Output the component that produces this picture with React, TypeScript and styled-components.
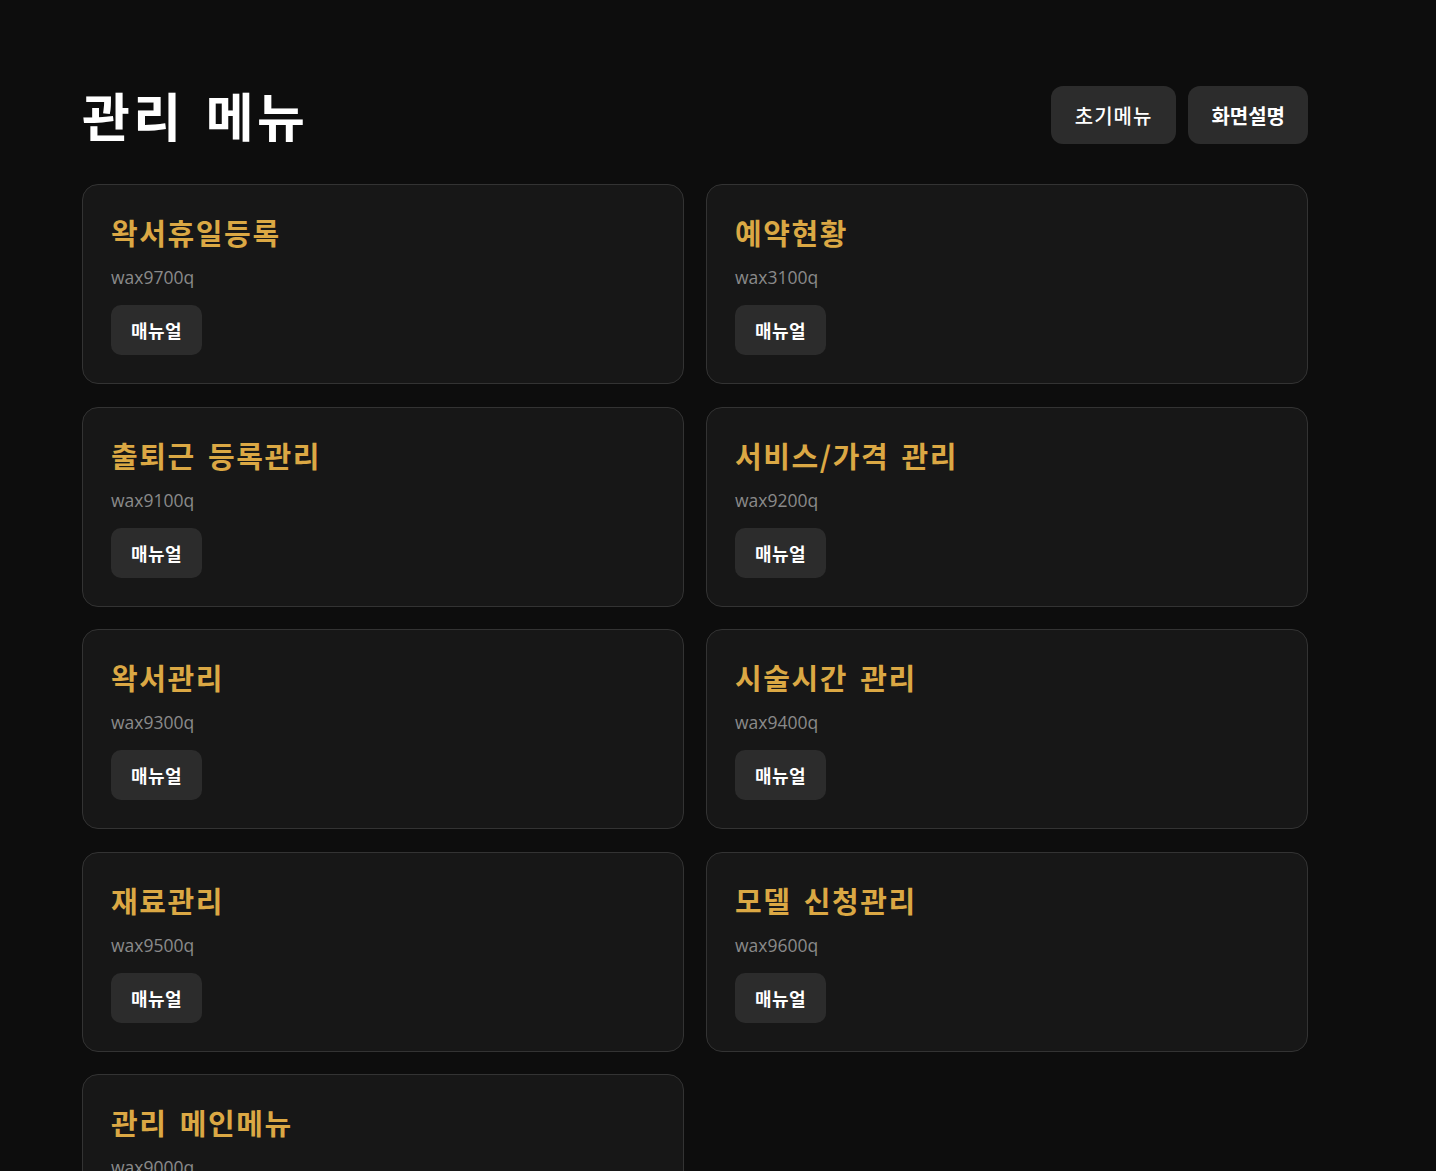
import React from "react";
import styled, { createGlobalStyle } from "styled-components";

const GlobalStyle = createGlobalStyle`
  body {
    margin: 0;
    background-color: #0d0d0d;
    font-family: "Noto Sans CJK KR", "Noto Sans", sans-serif;
  }
`;

const Page = styled.div`
  padding: 84px 82px 0;
  min-height: 100vh;
  box-sizing: border-box;
`;

const Container = styled.div`
  width: 1226px;
`;

const Header = styled.header`
  display: flex;
  align-items: center;
  justify-content: space-between;
  margin-bottom: 38px;
`;

const Title = styled.h1`
  margin: 0;
  font-size: 52px;
  line-height: 62px;
  font-weight: 700;
  letter-spacing: 3.4px;
  word-spacing: 6px;
  color: #ffffff;
`;

const HeaderActions = styled.div`
  display: flex;
  gap: 12px;
`;

const HeaderButton = styled.button<{ $bold?: boolean }>`
  height: 58px;
  padding: 0 ${({ $bold }) => ($bold ? "23px" : "24px")};
  border: none;
  border-radius: 12px;
  background-color: #2c2c2c;
  color: #ffffff;
  font-family: "Noto Sans CJK KR", sans-serif;
  font-size: 20px;
  font-weight: ${({ $bold }) => ($bold ? 700 : 500)};
  letter-spacing: ${({ $bold }) => ($bold ? "0" : "1px")};
  cursor: pointer;
`;

const Grid = styled.div`
  display: grid;
  grid-template-columns: repeat(2, 1fr);
  column-gap: 22px;
  row-gap: 22.5px;
`;

const Card = styled.div`
  background-color: #171717;
  border: 1px solid #333333;
  border-radius: 16px;
  padding: 28px;
  display: flex;
  flex-direction: column;
  align-items: flex-start;
`;

const CardTitle = styled.h2`
  margin: 0 0 14px;
  font-size: 29px;
  line-height: 38px;
  font-weight: 700;
  letter-spacing: 1.6px;
  word-spacing: 4px;
  color: #dba844;
`;

const Code = styled.div`
  font-family: "Open Sans", "Noto Sans", sans-serif;
  font-size: 17.5px;
  line-height: 24px;
  color: #8a8a8a;
  margin-bottom: 16px;
`;

const ManualButton = styled.button`
  height: 50px;
  padding: 0 20px;
  border: none;
  border-radius: 10px;
  background-color: #2c2c2c;
  color: #ffffff;
  font-family: "Noto Sans CJK KR", sans-serif;
  font-size: 18px;
  font-weight: 700;
  letter-spacing: 0.5px;
  cursor: pointer;
`;

const menus = [
  { title: "왁서휴일등록", code: "wax9700q" },
  { title: "예약현황", code: "wax3100q" },
  { title: "출퇴근 등록관리", code: "wax9100q" },
  { title: "서비스/가격 관리", code: "wax9200q" },
  { title: "왁서관리", code: "wax9300q" },
  { title: "시술시간 관리", code: "wax9400q" },
  { title: "재료관리", code: "wax9500q" },
  { title: "모델 신청관리", code: "wax9600q" },
  { title: "관리 메인메뉴", code: "wax9000q" },
];

const App = () => {
  return (
    <Page>
      <GlobalStyle />
      <Container>
        <Header>
          <Title>관리 메뉴</Title>
          <HeaderActions>
            <HeaderButton>초기메뉴</HeaderButton>
            <HeaderButton $bold>화면설명</HeaderButton>
          </HeaderActions>
        </Header>
        <Grid>
          {menus.map((m) => (
            <Card key={m.code}>
              <CardTitle>{m.title}</CardTitle>
              <Code>{m.code}</Code>
              <ManualButton>매뉴얼</ManualButton>
            </Card>
          ))}
        </Grid>
      </Container>
    </Page>
  );
};

export default App;
